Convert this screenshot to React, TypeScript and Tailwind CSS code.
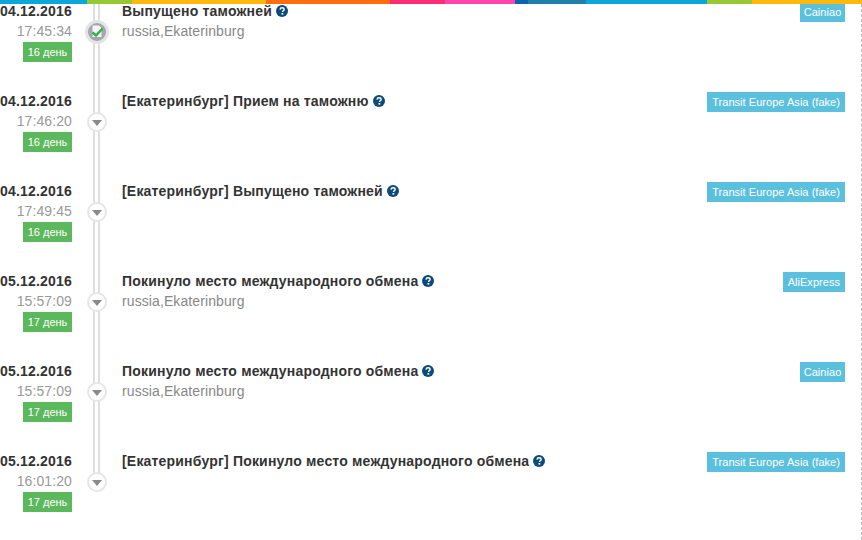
const BAR = [
  ["w-[87px]", "bg-[#0aa7dc]"],
  ["w-[45px]", "bg-[#98c734]"],
  ["w-[134px]", "bg-[#ffb80d]"],
  ["w-[124px]", "bg-[#ff6d0d]"],
  ["w-[55px]", "bg-[#fb2d74]"],
  ["w-[70px]", "bg-[#ff44b0]"],
  ["w-[13px]", "bg-[#0a63ad]"],
  ["w-[58px]", "bg-[#1f80a8]"],
  ["w-[121px]", "bg-[#0aa7dc]"],
  ["w-[45px]", "bg-[#98c734]"],
  ["w-[110px]", "bg-[#ffb80d]"],
];

const EVENTS = [
  { date: "04.12.2016", time: "17:45:34", days: "16 день", title: "Выпущено таможней", place: "russia,Ekaterinburg", source: "Cainiao", done: true },
  { date: "04.12.2016", time: "17:46:20", days: "16 день", title: "[Екатеринбург] Прием на таможню", source: "Transit Europe Asia (fake)" },
  { date: "04.12.2016", time: "17:49:45", days: "16 день", title: "[Екатеринбург] Выпущено таможней", source: "Transit Europe Asia (fake)" },
  { date: "05.12.2016", time: "15:57:09", days: "17 день", title: "Покинуло место международного обмена", place: "russia,Ekaterinburg", source: "AliExpress" },
  { date: "05.12.2016", time: "15:57:09", days: "17 день", title: "Покинуло место международного обмена", place: "russia,Ekaterinburg", source: "Cainiao" },
  { date: "05.12.2016", time: "16:01:20", days: "17 день", title: "[Екатеринбург] Покинуло место международного обмена", source: "Transit Europe Asia (fake)", last: true },
];

function Help() {
  return (
    <svg viewBox="0 0 12 12" className="ml-[4px] h-3 w-3 shrink-0">
      <circle cx="6" cy="6" r="6" fill="#0b4a7d" />
      <path d="M4 4.6C4.1 3.4 5 2.8 6.1 2.8 7.3 2.8 8.1 3.5 8.1 4.4 8.1 5.6 6.5 5.7 6.5 7" fill="none" stroke="#fff" strokeWidth="1.4" />
      <rect x="5.5" y="8" width="1.8" height="1.6" fill="#fff" />
    </svg>
  );
}

function Marker({ done }: { done?: boolean }) {
  if (done) {
    return (
      <span className="flex h-6 w-6 items-center justify-center rounded-full border-[3px] border-[#e4e4e4] bg-[#a3a7ad]">
        <svg viewBox="0 0 18 18" className="h-[18px] w-[18px]">
          <path d="M4.5 2.5H11L13.5 5V14H4.5z" fill="#f4f4f4" />
          <path d="M4.5 9.5L8 12.5L14.5 5.5" fill="none" stroke="#2fb344" strokeWidth="2.4" />
        </svg>
      </span>
    );
  }
  return (
    <span className="flex h-5 w-5 items-center justify-center rounded-full border-[2px] border-[#e6e6e6] bg-white">
      <svg viewBox="0 0 10 6" className="mt-px h-[6px] w-[10px]">
        <path d="M0 0h10L5 6z" fill="#8a8a8a" />
      </svg>
    </span>
  );
}

export default function App() {
  return (
    <div className="relative h-[540px] w-[862px] overflow-hidden bg-white pt-[2px] font-['Liberation_Sans',Arial,sans-serif] text-[14px]">
      <div className="absolute left-0 top-0 z-10 flex h-1 w-[862px]">
        {BAR.map(([w, c], i) => (
          <div key={i} className={`${w} ${c}`} />
        ))}
      </div>
      <div className="absolute bottom-0 right-0 top-1 border-r border-dashed border-[#bdbdbd]" />

      {EVENTS.map((e, i) => (
        <div key={i} className="flex h-[90px] items-start">
          <div className="flex w-[72px] shrink-0 flex-col items-end">
            <div className="-mt-px font-bold leading-5 tracking-[0.19px] text-[#333]">{e.date}</div>
            <div className="leading-5 tracking-[0.1px] text-[#999]">{e.time}</div>
            <div className="mt-px w-[49px] bg-[#5cb85c] text-center text-[11px] leading-5 text-white">{e.days}</div>
          </div>
          <div className="relative h-[90px] w-[50px] shrink-0">
            <div className={`ml-[21px] w-[7px] border-x-[2px] border-[#dfdfdf] ${e.last ? "-mt-[2px] h-[34px]" : "-mt-[2px] h-[92px]"}`} />
            <div className={`absolute ${e.done ? "left-[13px] top-[18px]" : "left-[15px] top-[20px]"}`}>
              <Marker done={e.done} />
            </div>
          </div>
          <div className="min-w-0 flex-1">
            <div className="-mt-px flex items-center font-bold leading-5 tracking-[0.19px] text-[#333]">
              {e.title}
              <Help />
            </div>
            {e.place && <div className="leading-5 tracking-[0.1px] text-[#888]">{e.place}</div>}
          </div>
          <div className="mr-[17px] shrink-0">
            <div className={`bg-[#5bc0de] text-center text-[11px] leading-5 tracking-[0.04px] text-white ${e.source === "Cainiao" ? "w-[45px]" : "px-[5px]"}`}>{e.source}</div>
          </div>
        </div>
      ))}
    </div>
  );
}
